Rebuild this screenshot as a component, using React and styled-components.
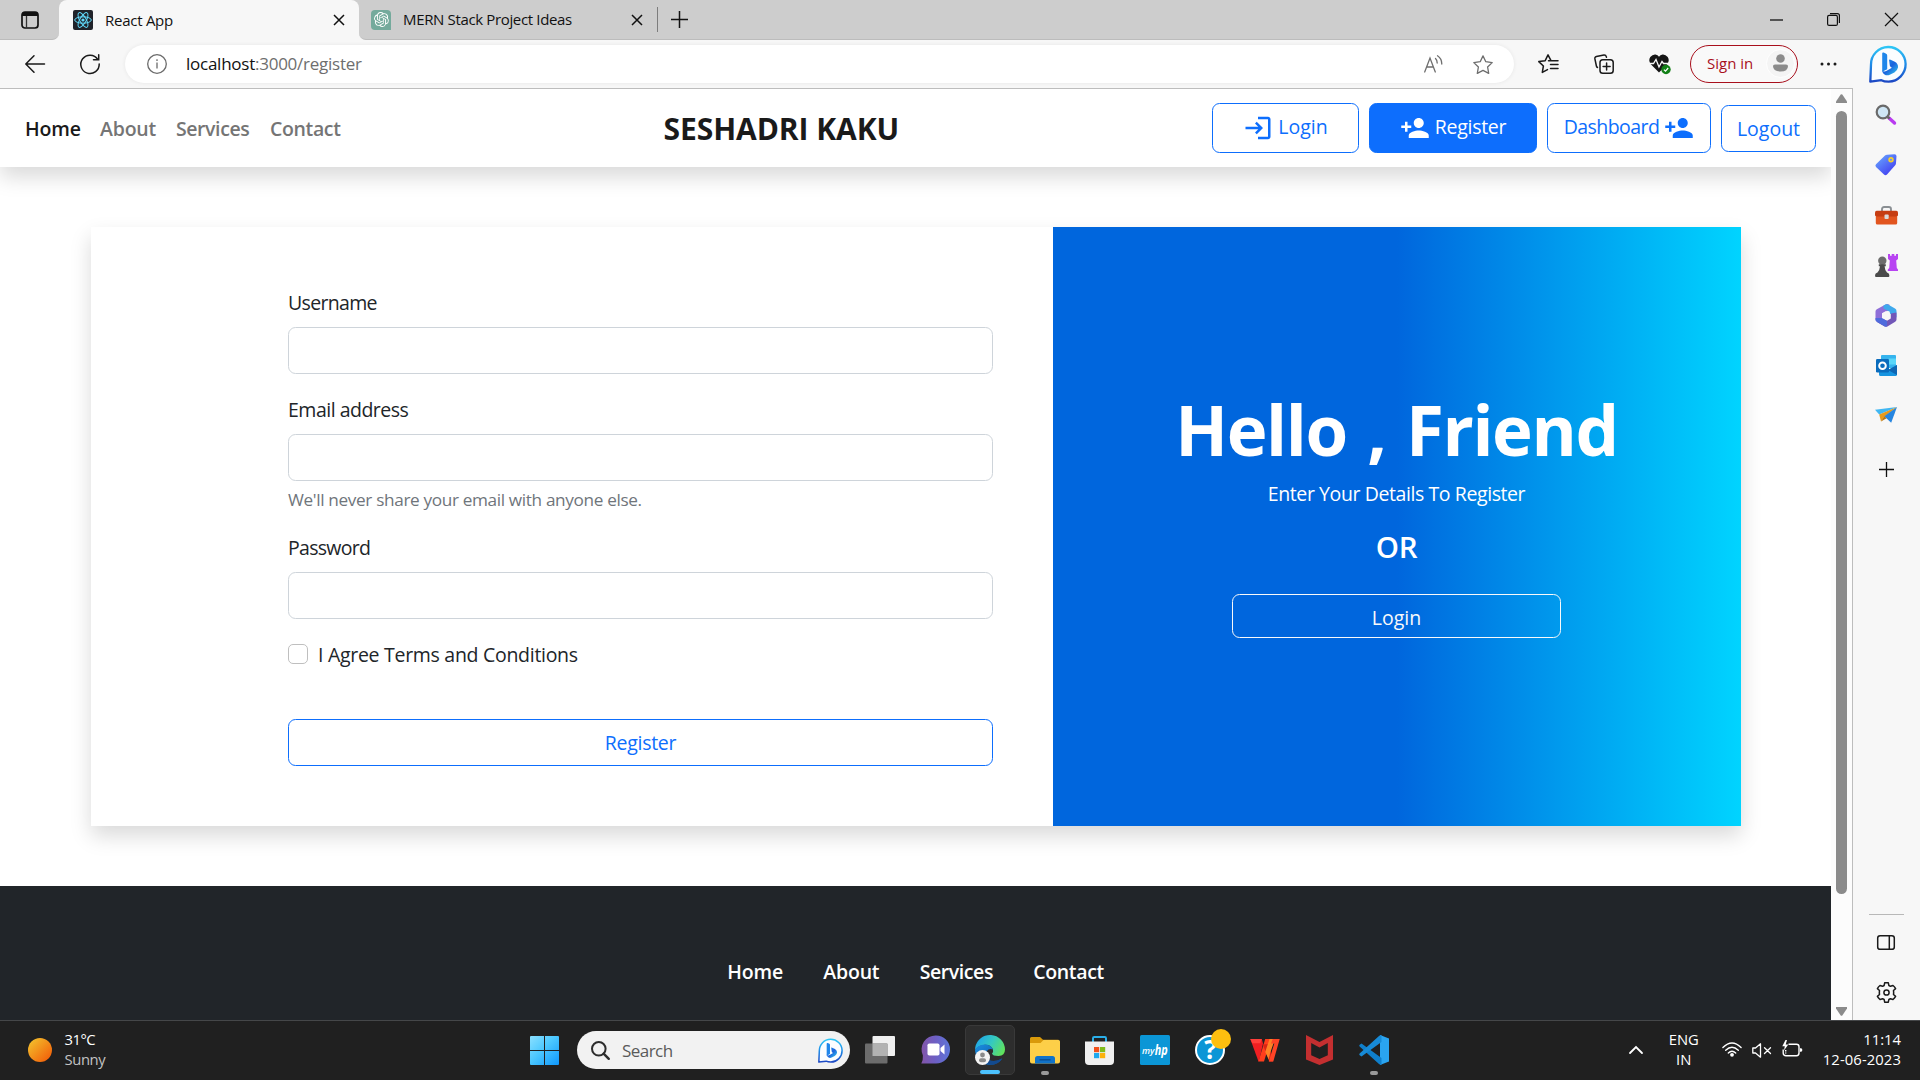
import React from "react";
import styled, { createGlobalStyle } from "styled-components";
import { SiOpenai } from "react-icons/si";

const GlobalStyle = createGlobalStyle`
  * { box-sizing: border-box; }
  body {
    margin: 0;
    background: #fff;
    font-family: "Open Sans", "Noto Sans", sans-serif;
    overflow: hidden;
  }
  svg { display: block; flex: none; overflow: visible; }
  button, input { font-family: inherit; margin: 0; }
`;

const Screen = styled.div`
  width: 1920px;
  height: 1080px;
  display: flex;
  flex-direction: column;
  background: #f7f7f7;
  overflow: hidden;
`;

/* ---------- tab strip ---------- */

const TabStrip = styled.div`
  height: 40px;
  flex: none;
  display: flex;
  background: #f7f7f7;
`;

const WorkspaceButton = styled.div`
  width: 59px;
  display: flex;
  align-items: center;
  justify-content: center;
  background: #cdcdcd;
  border-bottom: 1px solid #bcbcbc;
  border-bottom-right-radius: 7px;
`;

const ActiveTabSlot = styled.div`
  width: 300px;
  background: linear-gradient(#cdcdcd 50%, #f7f7f7 50%);
`;

const Tab = styled.div`
  height: 40px;
  width: ${(p) => p.$width}px;
  display: flex;
  align-items: center;
  padding: 0 15px 0 ${(p) => p.$pad}px;
  background: ${(p) => (p.$active ? "#f7f7f7" : "transparent")};
  border-radius: 8px 8px 0 0;
`;

const TabTitle = styled.span`
  flex: 1;
  margin-left: 12px;
  font-size: 15px;
  line-height: 38px;
  height: 39px;
  letter-spacing: ${(p) => p.$spacing}px;
  color: #111;
  white-space: nowrap;
`;

const InactiveStrip = styled.div`
  flex: 1;
  display: flex;
  align-items: center;
  background: #cdcdcd;
  border-bottom: 1px solid #bcbcbc;
  border-bottom-left-radius: 7px;
`;

const TabDivider = styled.div`
  width: 1px;
  height: 25px;
  background: #7d7d7d;
`;

const NewTab = styled.div`
  margin-left: 13px;
`;

const WindowControls = styled.div`
  margin-left: auto;
  display: flex;
`;

const WindowButton = styled.div`
  width: 57.5px;
  display: flex;
  align-items: center;
  justify-content: center;
`;

/* ---------- toolbar ---------- */

const Toolbar = styled.div`
  height: 48px;
  flex: none;
  display: flex;
  align-items: center;
  padding-left: 7px;
`;

const ToolButton = styled.div`
  width: ${(p) => p.$width || 55}px;
  padding-bottom: 1px;
  display: flex;
  align-items: center;
  justify-content: center;
`;

const AddressBar = styled.div`
  width: 1389px;
  height: 38px;
  margin: 0 7px 0 8px;
  padding: 0 21px 0 22px;
  display: flex;
  align-items: center;
  background: #fff;
  border-radius: 19px;
  box-shadow: 0 0 4px rgba(0, 0, 0, 0.07);
`;

const Url = styled.span`
  flex: 1;
  margin-left: 19px;
  padding-bottom: 1px;
  font-size: 17px;
  letter-spacing: -0.25px;
  color: #6e6e6e;
`;

const UrlHost = styled.span`
  color: #111;
`;

const AddressActions = styled.div`
  display: flex;
  align-items: center;
  gap: 30px;
`;

const SignIn = styled.div`
  width: 108px;
  height: 38px;
  margin: 0 3px 1px 3px;
  padding: 0 2px 1px 16px;
  display: flex;
  align-items: center;
  justify-content: space-between;
  border: 1.5px solid #a80f1c;
  border-radius: 19px;
  background: #f9f9f9;
  color: #a80f1c;
  font-size: 15px;
`;

const Avatar = styled.div`
  width: 29px;
  height: 29px;
  border-radius: 50%;
  background: #f4f4f4;
  border: 1px solid #fff;
  display: flex;
  align-items: center;
  justify-content: center;
`;

/* ---------- browser body ---------- */

const Body = styled.div`
  height: 932px;
  flex: none;
  display: flex;
`;

const Viewport = styled.div`
  width: 1853px;
  display: flex;
  border-top: 1px solid #bdbdbd;
  border-right: 1px solid #bdbdbd;
  background: #fff;
`;

const Page = styled.div`
  width: 1831px;
  height: 931px;
  overflow: hidden;
  display: flex;
  flex-direction: column;
`;

const Scrollbar = styled.div`
  width: 21px;
  display: flex;
  flex-direction: column;
  align-items: center;
  background: #fcfcfc;
  padding: 5px 0 4px;
`;

const ScrollThumb = styled.div`
  width: 11px;
  height: 783px;
  margin-top: 8px;
  border-radius: 6px;
  background: #8b8b8b;
`;

const ScrollDown = styled.div`
  margin-top: auto;
`;

/* ---------- site header ---------- */

const Header = styled.header`
  height: 78px;
  flex: none;
  display: grid;
  grid-template-columns: 638.500px 1fr auto;
  align-items: center;
  padding: 0 15px 0 25px;
  background: #fff;
  box-shadow: 0 10px 20px rgba(0, 0, 0, 0.15);
`;

const Nav = styled.nav`
  display: flex;
`;

const NavLink = styled.span`
  width: ${(p) => p.$width}px;
  padding-top: 1px;
  font-size: 19.5px;
  font-weight: 600;
  letter-spacing: ${(p) => p.$spacing}px;
  color: ${(p) => (p.$current ? "#1a1a1a" : "#757575")};
`;

const Brand = styled.span`
  padding-top: 1px;
  font-size: 30px;
  line-height: 36px;
  font-weight: 700;
  letter-spacing: -0.06px;
  color: #1a1a1a;
`;

const HeaderActions = styled.div`
  display: flex;
  align-items: center;
  gap: 10px;
`;

const OutlineButton = styled.button`
  width: ${(p) => p.$width}px;
  height: ${(p) => p.$height || 50}px;
  display: flex;
  align-items: center;
  justify-content: center;
  gap: 5px;
  padding: ${(p) => p.$drop || 0}px 0 0;
  border: 1px solid #0d6efd;
  border-radius: 7.5px;
  background: ${(p) => (p.$filled ? "#0d6efd" : "#fff")};
  color: ${(p) => (p.$filled ? "#fff" : "#0d6efd")};
  font-size: 19.5px;
  line-height: 30px;
  letter-spacing: ${(p) => p.$spacing || 0}px;
`;

const RaisedText = styled.span`
  padding-bottom: 2px;
`;

/* ---------- register card ---------- */

const Main = styled.main`
  flex: none;
  padding: 60px 90px 60px 91px;
`;

const Card = styled.section`
  height: 599px;
  display: grid;
  grid-template-columns: 962px 1fr;
  background: #fff;
  box-shadow: 0 10px 20px rgba(0, 0, 0, 0.15);
`;

const Form = styled.form`
  padding: 61px 60px 0 197px;
  display: flex;
  flex-direction: column;
`;

const Field = styled.div`
  display: flex;
  flex-direction: column;
  margin-bottom: 21px;
`;

const Label = styled.label`
  font-size: 19.5px;
  line-height: 30px;
  letter-spacing: ${(p) => p.$spacing}px;
  color: #212529;
`;

const Input = styled.input`
  height: 47px;
  margin-top: 9px;
  border: 1px solid #ced4da;
  border-radius: 7.5px;
  background: #fff;
  outline: none;
`;

const Hint = styled.span`
  margin: 6px 0 -1px;
  font-size: 17.2px;
  line-height: 26px;
  letter-spacing: -0.35px;
  color: #6f757b;
`;

const CheckRow = styled.div`
  height: 30px;
  display: flex;
  align-items: flex-start;
  gap: 10px;
  margin-bottom: 49px;
`;

const CheckBox = styled.span`
  width: 20px;
  height: 20px;
  margin-top: 4px;
  border: 1px solid #bfbfbf;
  border-radius: 5px;
`;

const Welcome = styled.aside`
  display: flex;
  flex-direction: column;
  align-items: center;
  padding: 160px 1px 0 0;
  background: linear-gradient(90deg, #0066dd 0%, #0066dd 50%, #00d4ff 100%);
  color: #fff;
`;

const WelcomeTitle = styled.h1`
  margin: 0 0 8px;
  font-size: 69px;
  line-height: 84px;
  font-weight: 700;
  letter-spacing: -1.4px;
  word-spacing: 4px;
`;

const WelcomeText = styled.p`
  margin: 0 0 20px;
  font-size: 19.5px;
  line-height: 30px;
  letter-spacing: -0.41px;
`;

const WelcomeOr = styled.p`
  margin: 0 0 29px;
  font-size: 29.5px;
  line-height: 36px;
  font-weight: 600;
  letter-spacing: -0.3px;
`;

const WelcomeLogin = styled.button`
  width: 329px;
  height: 44px;
  padding: 3px 0 0;
  border: 1px solid #f8f9fa;
  border-radius: 7.5px;
  background: transparent;
  color: #f8f9fa;
  font-size: 19.5px;
  line-height: 30px;
`;

const Footer = styled.footer`
  flex: 1;
  display: flex;
  justify-content: center;
  gap: 40.3px;
  padding-top: 71px;
  background: #212529;
`;

const FooterLink = styled.span`
  font-size: 19.5px;
  line-height: 30px;
  font-weight: 600;
  letter-spacing: ${(p) => p.$spacing}px;
  color: #fff;
`;

/* ---------- sidebar ---------- */

const Sidebar = styled.aside`
  width: 67px;
  height: 932px;
  display: flex;
  flex-direction: column;
  align-items: center;
  padding: 2px 1px 3px 0;
`;

const SideItem = styled.div`
  height: 50px;
  margin-top: ${(p) => p.$offset || 0}px;
  display: flex;
  align-items: center;
`;

const SideDivider = styled.div`
  width: 35px;
  height: 1px;
  margin: auto 0 2px;
  background: #b8b8b8;
`;

/* ---------- taskbar ---------- */

const Taskbar = styled.div`
  height: 60px;
  flex: none;
  display: flex;
  align-items: center;
  padding: 0 19px 1px 0;
  border-top: 1px solid #454749;
  background: #202020;
  color: #fff;
`;

const Weather = styled.div`
  width: 530px;
  display: flex;
  align-items: center;
  padding-left: 28px;
  gap: 12.5px;
`;

const Sun = styled.div`
  width: 24px;
  height: 24px;
  border-radius: 50%;
  background: linear-gradient(135deg, #f3bd2b 10%, #f2660c 85%);
`;

const Stack = styled.div`
  display: flex;
  flex-direction: column;
  align-items: ${(p) => p.$align};
  margin-right: ${(p) => p.$right || 0}px;
  padding-bottom: 2px;
`;

const StackLine = styled.span`
  font-size: 14.8px;
  line-height: 20px;
  letter-spacing: ${(p) => p.$spacing || 0}px;
  color: ${(p) => (p.$dim ? "#c3c3c3" : "#fff")};
`;

const SearchBox = styled.div`
  width: 273px;
  height: 38px;
  margin: 0 3px 0 18px;
  padding: 0 7px 0 14px;
  display: flex;
  align-items: center;
  border-radius: 19px;
  background: #f2f2f2;
`;

const SearchText = styled.span`
  flex: 1;
  margin-left: 12px;
  font-size: 17px;
  letter-spacing: -0.55px;
  color: #5a5a5a;
`;

const Task = styled.div`
  width: 50px;
  height: 50px;
  margin: 0 2.450px;
  display: flex;
  flex-direction: column;
  align-items: center;
  padding-top: ${(p) => (p.$active ? 9 : 10)}px;
  border-radius: 5px;
  border: ${(p) => (p.$active ? "1px solid #393939" : "none")};
  background: ${(p) => (p.$active ? "#2d2d2d" : "transparent")};
`;

const TaskMark = styled.div`
  width: ${(p) => (p.$active ? 20 : 8)}px;
  height: 4px;
  margin-top: auto;
  border-radius: 2px;
  background: ${(p) => (p.$active ? "#4cc2ff" : "#9a9a9a")};
`;

const Tray = styled.div`
  margin-left: auto;
  display: flex;
  align-items: center;
`;

const TrayIcon = styled.div`
  margin-right: ${(p) => p.$right}px;
  padding-bottom: ${(p) => p.$lift || 0}px;
`;

/* ---------- drawings ---------- */

const Close = ({ size = 10, stroke = 1.5 }) => (
  <svg width={size} height={size} viewBox="0 0 10 10" stroke="#111" strokeWidth={stroke}>
    <path d="M0 0L10 10M10 0L0 10" />
  </svg>
);

const WorkspaceIcon = () => (
  <svg width="18" height="18" viewBox="0 0 18 18">
    <rect x="1" y="1" width="16" height="16" rx="3" fill="none" stroke="#111" strokeWidth="1.7" />
    <path d="M1 5V3.5A2.5 2.5 0 0 1 3.5 1h11A2.5 2.5 0 0 1 17 3.5V5z" fill="#111" />
    <path d="M5.5 5v12" stroke="#333" strokeWidth="1.3" />
  </svg>
);

const ReactFavicon = () => (
  <svg width="20" height="20" viewBox="0 0 20 20">
    <rect width="20" height="20" rx="2" fill="#20232a" />
    <g fill="none" stroke="#61dafb" strokeWidth="1">
      <ellipse cx="10" cy="10" rx="8.3" ry="3.2" />
      <ellipse cx="10" cy="10" rx="8.3" ry="3.2" transform="rotate(60 10 10)" />
      <ellipse cx="10" cy="10" rx="8.3" ry="3.2" transform="rotate(120 10 10)" />
    </g>
    <circle cx="10" cy="10" r="1.6" fill="#61dafb" />
  </svg>
);

const ChatFavicon = styled.div`
  width: 20px;
  height: 20px;
  display: flex;
  align-items: center;
  justify-content: center;
  border-radius: 4px 4px 0 4px;
  background: #74aa9c;
  color: #fff;
`;

const BingIcon = ({ size, id }) => (
  <svg width={size} height={size} viewBox="0 0 38 38">
    <defs>
      <linearGradient id={id} x1="0" y1="0" x2="0" y2="1">
        <stop offset="0" stopColor="#2ec6f5" />
        <stop offset=".5" stopColor="#1f8ce8" />
        <stop offset="1" stopColor="#1c48c4" />
      </linearGradient>
      <linearGradient id={id + "b"} x1="0" y1="0" x2="1" y2="1">
        <stop offset="0" stopColor="#1f9bee" />
        <stop offset=".5" stopColor="#1b62dd" />
        <stop offset="1" stopColor="#35d3ee" />
      </linearGradient>
    </defs>
    <path d="M1.3 36.6L2 19.5A17.3 17.3 0 1 1 19.6 36.6Q15 36.6 12.4 35.2Q6 36 1.3 36.6Z" fill="#fbfdff" stroke={`url(#${id})`} strokeWidth="2.3" strokeLinejoin="round" />
    <path d="M13.2 8.6q0-1.5 1.5-1l2 .8q1.5.6 1.5 2v13.8l-5 2.6z" fill="#1f86ea" />
    <path d="M20.2 16q-.8-2.2 1.4-1.3l4.2 2q3.6 2 3.2 5.9-.6 3.2-3.6 4.9l-4.6 2.3q-3 1.2-5.3-.4-2.3-1.6-2.3-4.2 1.6 2.2 4.5.6l5.2-3-1.2-.9q-.6-.4-.9-1.3z" fill={`url(#${id}b)`} />
  </svg>
);

const LoginIcon = () => (
  <svg width="30" height="30" viewBox="0 0 24 24" fill="currentColor">
    <path d="M11 7L9.6 8.4l2.6 2.6H2v2h10.2l-2.6 2.6L11 17l5-5zm9 12h-8v2h8c1.1 0 2-.9 2-2V5c0-1.1-.9-2-2-2h-8v2h8z" />
  </svg>
);

const PersonAddIcon = () => (
  <svg width="30" height="30" viewBox="0 0 24 24" fill="currentColor">
    <path d="M15 12c2.21 0 4-1.79 4-4s-1.79-4-4-4-4 1.79-4 4 1.79 4 4 4zm-9-2V7H4v3H1v2h3v3h2v-3h3v-2H6zm9 4c-2.67 0-8 1.34-8 4v2h16v-2c0-2.66-5.33-4-8-4z" />
  </svg>
);

const Arrow = ({ down }) => (
  <svg width="11" height="9" viewBox="0 0 11 9" fill="#8b8b8b">
    <path d={down ? "M0 0h11v1.5L6.3 8.4q-.8.9-1.6 0L0 1.5z" : "M0 9h11V7.5L6.3.6q-.8-.9-1.6 0L0 7.5z"} />
  </svg>
);

const MagnifierIcon = () => (
  <svg width="22" height="22" viewBox="0 0 22 22">
    <path d="M14 14l5.5 5" stroke="#b93bf0" strokeWidth="3.4" strokeLinecap="round" />
    <path d="M12.6 12.8l2 1.8" stroke="#666" strokeWidth="2.4" />
    <circle cx="8" cy="8" r="6.3" fill="#cfe6f5" stroke="#6a6a6a" strokeWidth="2.2" />
  </svg>
);

const TagIcon = () => (
  <svg width="22" height="22" viewBox="0 0 22 22">
    <defs>
      <linearGradient id="tag" x1="0" y1="0" x2=".8" y2="1">
        <stop offset="0" stopColor="#6bb0ff" />
        <stop offset="1" stopColor="#4038f0" />
      </linearGradient>
    </defs>
    <path d="M10 1.4Q10.800 .7 12 .7L19.500 .3Q21.500 .3 21.500 2.200L21 9Q21 10.300 20.200 11.200L12 20.500Q10.500 22 9 20.600L1 13Q-.2 11.600 1 10.300Z" fill="url(#tag)" />
    <circle cx="16" cy="5.800" r="1.900" fill="#5f8cff" stroke="#f5cf2d" strokeWidth="1.700" />
  </svg>
);

const ToolboxIcon = () => (
  <svg width="23" height="19" viewBox="0 0 23 19">
    <path d="M7 5V3.200Q7 1 9.200 1h4.600Q16 1 16 3.200V5" fill="none" stroke="#8a8f93" strokeWidth="1.900" />
    <rect x=".8" y="8" width="21.400" height="10.500" rx="1.600" fill="#e2551f" />
    <path d="M0 6.500Q0 4.800 1.700 4.800h19.600Q23 4.800 23 6.500V9.500Q22 10.500 20 10.500H3Q1 10.500 0 9.500z" fill="#c63d12" />
    <rect x="9.500" y="8.500" width="4.200" height="4.600" rx="1" fill="#dadada" />
  </svg>
);

const ChessIcon = () => (
  <svg width="23" height="23" viewBox="0 0 23 23">
    <path d="M13 0h2v1.800h1.700V0h2.600v1.800H21V0h2v5l-1.800 1.500.6 7.500 1.200 1.400v1.600H12.800v-1.600l1.400-1.400.6-7.500L13 5z" fill="#b844f2" />
    <circle cx="7.300" cy="6.800" r="4.200" fill="#6d6d6d" />
    <path d="M3.800 10.200h7v2H9.600q.2 4 2.400 6.300 2.300.6 2.300 2.500v1.200q0 .8-.9.8H1q-.9 0-.9-.8V21q0-1.900 2.400-2.500 2.200-2.300 2.500-6.300H3.800z" fill="#4b4b4b" />
  </svg>
);

const CopilotRingIcon = () => (
  <svg width="22" height="23" viewBox="0 0 22 23">
    <path d="M11 .3L1.800 5.200Q.5 6 .5 7.600v8Q.5 17 1.800 17.700L7 20.500V9.500L14.500 6V.8Q12.500-.4 11 .3z" fill="#8f6fd8" />
    <path d="M8.500 1.600L11 .3Q12 0 13 .4l7 4Q21.500 5.300 21.500 7v6.500L14.800 9.600V7.800L8.500 4.500z" fill="#3fa9ec" />
    <path d="M21.500 8.500V15.600Q21.500 17 20.200 17.800L12.400 22.400Q11 23.100 9.600 22.400L2 18 8 14.500l4 2.200 3.800-2.200V9.500z" fill="#7257b8" />
    <path d="M.5 14v1.600Q.5 17 1.800 17.800L9.500 22.300q1.500.5 2.500 0V16.900L7 14z" fill="#4f6bdc" />
    <path d="M11 7l4 2.300v4.500l-4 2.300-4-2.300V9.300z" fill="#f7f7f7" />
  </svg>
);

const OutlookIcon = () => (
  <svg width="21" height="21" viewBox="0 0 21 21">
    <rect x="5" y="0" width="15" height="13" rx="1" fill="#36b4ee" />
    <rect x="12.500" y="3.500" width="7.500" height="6" fill="#59d6f9" />
    <path d="M3 11l9 4 9-5v9.500Q21 21 19.500 21H4.500Q3 21 3 19.500z" fill="#1694e0" />
    <path d="M21 10v10l-9-5z" fill="#0d66b4" />
    <rect x="0" y="4" width="13" height="13.500" rx="1.300" fill="#0a6cbd" />
    <circle cx="6.500" cy="10.700" r="3.300" fill="none" stroke="#fff" strokeWidth="2" />
  </svg>
);

const PlaneIcon = () => (
  <svg width="22" height="16" viewBox="0 0 22 16">
    <path d="M0 2.800L22 0 4.200 7.600z" fill="#41b7f2" />
    <path d="M22 0L4.200 7.600 6 14.500 9 10z" fill="#e79a1b" />
    <path d="M22 0L9.300 9.200 16.200 15.800Z" fill="#2585e0" />
    <path d="M6 14.500l3.300-5.300 2.300 2.100z" fill="#b87410" />
  </svg>
);

const PlusIcon = ({ size, stroke = 1.300 }) => (
  <svg width={size} height={size} viewBox={`0 0 ${size} ${size}`} stroke="#111" strokeWidth={stroke}>
    <path d={`M0 ${size / 2}H${size}M${size / 2} 0V${size}`} />
  </svg>
);

const PanelIcon = () => (
  <svg width="18" height="15" viewBox="0 0 18 15" fill="none" stroke="#1a1a1a" strokeWidth="1.500">
    <rect x=".7" y=".7" width="16.600" height="13.600" rx="2.400" />
    <path d="M12.300 1v13" />
  </svg>
);

const GearIcon = () => (
  <svg width="21" height="21" viewBox="0 0 21 21" fill="none" stroke="#1a1a1a" strokeWidth="1.500" strokeLinejoin="round">
    <path d="M8.700 .8Q10.500 .5 12.300 .8L12.900 3.500 14.400 4.300 17 3.500Q18.600 4.800 19.600 6.600L17.500 8.500Q17.800 10.500 17.500 12.500L19.600 14.400Q18.600 16.200 17 17.500L14.400 16.700 12.900 17.500 12.300 20.200Q10.500 20.500 8.700 20.200L8.100 17.500 6.600 16.700 4 17.500Q2.400 16.200 1.400 14.400L3.500 12.500Q3.200 10.500 3.500 8.500L1.400 6.600Q2.400 4.800 4 3.500L6.600 4.300 8.100 3.500Z" />
    <circle cx="10.500" cy="10.500" r="2.600" />
  </svg>
);

const WindowsIcon = () => (
  <svg width="29" height="29" viewBox="0 0 29 29">
    <defs>
      <linearGradient id="win" gradientUnits="userSpaceOnUse" x1="0" y1="0" x2="29" y2="29">
        <stop offset="0" stopColor="#8be0ff" />
        <stop offset=".45" stopColor="#4cc8ff" />
        <stop offset="1" stopColor="#0f97fb" />
      </linearGradient>
    </defs>
    <path d="M0 1q0-1 1-1h13v14H0zM15 0h13q1 0 1 1v13H15zM0 15h14v14H1q-1 0-1-1zM15 15h14v13q0 1-1 1H15z" fill="url(#win)" />
  </svg>
);

const TaskViewIcon = () => (
  <svg width="30" height="29" viewBox="0 0 30 29">
    <rect x="7.500" y="1" width="22.500" height="20" rx="1" fill="#efefef" />
    <rect x="0" y="8.500" width="22.500" height="20" rx="1" fill="#6c6c6c" />
    <path d="M7.500 8.500h15V21h-15z" fill="#b2b2b2" />
  </svg>
);

const ChatIcon = () => (
  <svg width="29" height="29" viewBox="0 0 29 29">
    <defs>
      <linearGradient id="chat" x1="0" y1="0" x2="1" y2="0">
        <stop offset="0" stopColor="#8355a8" />
        <stop offset=".5" stopColor="#6d5fc4" />
        <stop offset="1" stopColor="#5d76d8" />
      </linearGradient>
    </defs>
    <path d="M15 .5A14 14 0 1 1 15 28.500H.3Q2.200 25 1.900 20.500A14 14 0 0 1 15 .5z" fill="url(#chat)" />
    <rect x="6.500" y="8.500" width="12" height="12" rx="1.800" fill="#fff" />
    <path d="M19.500 13l4-3.500v10l-4-3.500z" fill="#fff" />
  </svg>
);

const EdgeIcon = () => (
  <svg width="30" height="30" viewBox="0 0 30 30">
    <defs>
      <linearGradient id="edgeTop" x1="0" y1=".3" x2="1" y2=".7">
        <stop offset="0" stopColor="#1ea5ea" />
        <stop offset=".5" stopColor="#35c9c0" />
        <stop offset="1" stopColor="#62e35a" />
      </linearGradient>
      <linearGradient id="edgeLow" x1="0" y1="0" x2="1" y2="1">
        <stop offset="0" stopColor="#1a8fe0" />
        <stop offset="1" stopColor="#0c4fa2" />
      </linearGradient>
    </defs>
    <path d="M.2 12.500A15 15 0 0 1 30 14.500Q30 20.500 23.500 21 17.500 21 17 18.500 18.600 16.500 18 14.500 16 9.500 10 9.700 3.500 10 .2 15z" fill="url(#edgeTop)" />
    <path d="M0 15Q3 9.700 9.500 9.600 16 9.600 18 14.500 14 13 11.500 16.500 9.500 21 13.500 25 19 28.500 27.300 23.500 23 30 15 30 1 29 0 15z" fill="url(#edgeLow)" />
    <path d="M12.500 15.500Q9 19 12.500 23.800 18 28.500 27.300 23.300 23.500 30 15.500 30 9 27 8.500 22 8.500 17.500 12.500 15.500z" fill="#134a8e" />
    <circle cx="7.500" cy="22.500" r="7.500" fill="#f4f4f4" />
    <circle cx="7.500" cy="20" r="2.400" fill="#8a8a8a" />
    <rect x="4" y="23.300" width="7" height="4" rx="2" fill="#8a8a8a" />
  </svg>
);

const FolderIcon = () => (
  <svg width="30" height="30" viewBox="0 0 30 30">
    <path d="M0 3.500Q0 2 1.500 2H10l3 2.700H28.500V10H0z" fill="#d99a0b" />
    <path d="M0 8H10.500L13.500 5H28.500Q30 5 30 6.500V26.500Q30 28.500 28 28.500H2Q0 28.500 0 26.500z" fill="#fdcf48" />
    <path d="M5 28.500V23.500Q5 21 7.500 21h15Q25 21 25 23.500v5z" fill="#1173c9" />
    <path d="M9.500 24.800h11" stroke="#0b4f92" strokeWidth="1.400" />
  </svg>
);

const StoreIcon = () => (
  <svg width="29" height="30" viewBox="0 0 29 30">
    <path d="M8 7V3.200Q8 2 9.200 2h10.600Q21 2 21 3.200V7" fill="none" stroke="#2aaee8" strokeWidth="2" />
    <path d="M0 6.500h29V26q0 4-4 4H4q-4 0-4-4z" fill="#f0f0f0" />
    <path d="M9 12h5.200v5.200H9z" fill="#f1511b" />
    <path d="M15 12h5.200v5.200H15z" fill="#80bb1a" />
    <path d="M9 18h5.200v5.200H9z" fill="#1ea8ef" />
    <path d="M15 18h5.200v5.200H15z" fill="#fbb20d" />
  </svg>
);

const HpIcon = () => (
  <svg width="30" height="30" viewBox="0 0 30 30">
    <rect width="30" height="30" rx="1.500" fill="#0b96d6" />
    <text x="2" y="18.500" fontSize="9.500" fontWeight="600" fill="#fff" fontStyle="italic" textLength="12.500" lengthAdjust="spacingAndGlyphs">my</text>
    <text x="14.800" y="19.500" fontSize="15" fontWeight="700" fill="#fff" fontStyle="italic" textLength="13" lengthAdjust="spacingAndGlyphs">hp</text>
  </svg>
);

const HelpIcon = () => (
  <svg width="30" height="30" viewBox="0 0 30 30">
    <circle cx="15" cy="15" r="14" fill="#0b96d6" stroke="#fff" strokeWidth="2" />
    <text x="15.500" y="24" textAnchor="middle" fontSize="26" fontWeight="700" fill="#fff">?</text>
    <circle cx="26" cy="4" r="10" fill="#fdbf0f" />
  </svg>
);

const WpsIcon = () => (
  <svg width="30" height="30" viewBox="0 0 30 30">
    <path d="M.3 4H11.800L13 8.500 9 26.500H8.500z" fill="#f01f22" />
    <path d="M.3 4H11.800L10.300 8.200H2.300z" fill="#ff3f3a" />
    <path d="M8.500 26.500L15.200 4H21L14 26.500z" fill="#ff3d1c" />
    <path d="M12.800 9.500L15.600 16.500 19.200 26.500H23L19 9z" fill="#d92315" />
    <path d="M15.200 17L19.500 4H25L20 18.500 18.800 24.500z" fill="#ff8125" />
    <path d="M18.800 26.500L24.300 8.500H21L22.700 4H29.700L23.300 26.500z" fill="#ff4426" />
  </svg>
);

const McAfeeIcon = () => (
  <svg width="27" height="30" viewBox="0 0 27 30">
    <path d="M0 0L13.500 7 27 0V24.500L13.500 30 0 24.500z" fill="#c42f30" />
    <path d="M5.200 8L13.500 12.500 21.800 8V20.300L13.500 24 5.200 20.300z" fill="#202020" />
  </svg>
);

const CodeIcon = () => (
  <svg width="30" height="30" viewBox="0 0 30 30">
    <path d="M21 0L30 3.500V26.500L21 30z" fill="#2aa4f0" />
    <path d="M2.500 8.500L22.500 23V30Q21 30 20 29L.6 11.500Q-.2 10.500 .7 9.700z" fill="#0f7fcb" />
    <path d="M2.500 21.500L22.500 7V0Q21 0 20 1L.6 18.500Q-.2 19.500 .7 20.300z" fill="#178ad6" />
  </svg>
);

const SearchGlyph = () => (
  <svg width="19" height="19" viewBox="0 0 19 19" fill="none" stroke="#2d2d2d" strokeWidth="2">
    <circle cx="7.800" cy="7.800" r="6.800" />
    <path d="M12.600 12.600L17.800 17.800" strokeWidth="2.400" strokeLinecap="round" />
  </svg>
);

const InfoIcon = () => (
  <svg width="20" height="20" viewBox="0 0 20 20" fill="none" stroke="#6b6b6b" strokeWidth="1.300">
    <circle cx="10" cy="10" r="9.300" />
    <path d="M10 8.500V14.500M10 5.300V7" />
  </svg>
);

const ReadAloudIcon = () => (
  <svg width="19" height="18" viewBox="0 0 19 18" fill="none" stroke="#6e6e6e" strokeWidth="1.300" strokeLinecap="round">
    <path d="M.7 17L6 3l5.300 14M2.700 12H9.300M11.500 3.500Q13.200 5 13.200 8M13.500 .8Q17.800 3.500 17.800 9" />
  </svg>
);

const starPath = "M10 .9L12.800 6.700 19.200 7.600 14.600 12 15.700 18.400 10 15.400 4.300 18.400 5.400 12 .8 7.600 7.200 6.700Z";

const StarIcon = () => (
  <svg width="20" height="19" viewBox="0 0 20 19" fill="none" stroke="#6e6e6e" strokeWidth="1.300" strokeLinejoin="round">
    <path d={starPath} />
  </svg>
);

const FavoritesIcon = () => (
  <svg width="21" height="19" viewBox="0 0 21 19" fill="none" stroke="#1a1a1a" strokeWidth="1.500" strokeLinejoin="round" strokeLinecap="round">
    <path d="M10.500 6.700H13L10 .9 7.200 6.700 .8 7.600 5.400 12 4.300 18.400 9.500 15.600M13 6.700H20M12.500 10.500H20M12.500 14.500H20" />
  </svg>
);

const CollectionsIcon = () => (
  <svg width="20" height="20" viewBox="0 0 20 20" fill="none" stroke="#1a1a1a" strokeWidth="1.500" strokeLinecap="round">
    <rect x="6" y="5.800" width="13.200" height="13.400" rx="2.800" />
    <path d="M12.600 9V16M9.100 12.500H16.100M3.500 13.500Q2.600 13 2.400 12L.9 4.900Q.6 3 2.400 2.500L9.900.9Q11.800.7 12.300 2.600L12.500 3.300" />
  </svg>
);

const HeartIcon = () => (
  <svg width="21" height="20" viewBox="0 0 21 20">
    <path d="M10 18.500L1.800 10.200Q-1 6.500 1.300 3 3.500 .2 6.500 .5 8.800 .8 10 2.800 11.200 .8 13.500 .5 16.500 .2 18.700 3 21 6.500 18.200 10.200Z" fill="#151515" />
    <path d="M0 9.500H4.500L7 5.500 10 13 13 7.500 14.500 9.500H20" fill="none" stroke="#f7f7f7" strokeWidth="1.300" />
    <circle cx="17" cy="15.500" r="4.700" fill="#128017" />
    <path d="M14.900 15.600L16.500 17.100 19.200 14" fill="none" stroke="#fff" strokeWidth="1.200" />
  </svg>
);

const BackIcon = () => (
  <svg width="20" height="18" viewBox="0 0 20 18" fill="none" stroke="#1a1a1a" strokeWidth="1.500" strokeLinecap="round" strokeLinejoin="round">
    <path d="M9 .8L.8 9 9 17.200M1 9H19.500" />
  </svg>
);

const ReloadIcon = () => (
  <svg width="20" height="20" viewBox="0 0 20 20" fill="none" stroke="#1a1a1a" strokeWidth="1.500" strokeLinecap="round">
    <path d="M17.700 5.300A9.200 9.200 0 1 0 19.200 10M18.700 .8V5.800H13.500" />
  </svg>
);

const PersonIcon = () => (
  <svg width="15" height="18" viewBox="0 0 15 18" fill="#8b8b8b">
    <circle cx="7.500" cy="4.500" r="4.300" />
    <path d="M2 10.500h11q2 0 2 1.500 0 5.500-7.500 5.500T0 12q0-1.500 2-1.500z" />
  </svg>
);

const WifiIcon = () => (
  <svg width="20" height="15" viewBox="0 0 20 15" fill="none" stroke="#fff" strokeWidth="1.400" strokeLinecap="round">
    <path d="M.9 5.500Q10-3.500 19.100 5.500M3.700 8.300Q10 2.200 16.300 8.300M6.300 11Q10 7.500 13.700 11" />
    <circle cx="10" cy="12.800" r="1.900" fill="#fff" stroke="none" />
  </svg>
);

const MuteIcon = () => (
  <svg width="20" height="15" viewBox="0 0 20 15" fill="none" stroke="#fff" strokeWidth="1.300" strokeLinejoin="round" strokeLinecap="round">
    <path d="M.8 5H3.500L8.500 .8V14.200L3.500 10H.8ZM12.500 4.800L18.500 10.500M18.500 4.800L12.500 10.500" />
  </svg>
);

const BatteryIcon = () => (
  <svg width="21" height="17" viewBox="0 0 21 17" fill="none" stroke="#fff" strokeWidth="1.400">
    <path d="M6.500 4.200H14.500Q17 4.200 17 6.700V13Q17 15.700 14.500 15.700H4Q1.200 15.700 1.200 13V9.500" />
    <path d="M18 8.200H19Q20.300 8.500 20.300 10T19 11.800H18z" fill="#fff" stroke="none" />
    <path d="M3.500 0L.3 6.300H2.800L2 10.500 6.300 4.500H3.700L5 0Z" fill="#fff" stroke="none" />
    <path d="M3.700 10V13.500" strokeDasharray="1.500 1" />
  </svg>
);

const ChevronUp = () => (
  <svg width="14" height="8" viewBox="0 0 14 8" fill="none" stroke="#fff" strokeWidth="1.800" strokeLinecap="round">
    <path d="M1 7L7 1 13 7" />
  </svg>
);

export default function App() {
  return (
    <Screen>
      <GlobalStyle />
      <TabStrip>
        <WorkspaceButton><WorkspaceIcon /></WorkspaceButton>
        <ActiveTabSlot>
          <Tab $active $width={300} $pad={14}>
            <ReactFavicon />
            <TabTitle $spacing={-0.26}>React App</TabTitle>
            <Close />
          </Tab>
        </ActiveTabSlot>
        <InactiveStrip>
          <Tab $width={298} $pad={12}>
            <ChatFavicon><SiOpenai size={15} /></ChatFavicon>
            <TabTitle $spacing={-0.35}>MERN Stack Project Ideas</TabTitle>
            <Close />
          </Tab>
          <TabDivider />
          <NewTab><PlusIcon size={17} stroke={1.500} /></NewTab>
          <WindowControls>
            <WindowButton>
              <svg width="13" height="2" viewBox="0 0 13 2"><path d="M0 1h13" stroke="#111" strokeWidth="1.300" /></svg>
            </WindowButton>
            <WindowButton>
              <svg width="13" height="13" viewBox="0 0 13 13" fill="none" stroke="#111" strokeWidth="1.200">
                <rect x=".6" y="2.400" width="9.800" height="10" rx="1.500" />
                <path d="M3 .6H10.400Q12.400 .6 12.400 2.600V10" />
              </svg>
            </WindowButton>
            <WindowButton><Close size={13} stroke={0.950} /></WindowButton>
          </WindowControls>
        </InactiveStrip>
      </TabStrip>

      <Toolbar>
        <ToolButton><BackIcon /></ToolButton>
        <ToolButton><ReloadIcon /></ToolButton>
        <AddressBar>
          <InfoIcon />
          <Url><UrlHost>localhost</UrlHost>:3000/register</Url>
          <AddressActions>
            <ReadAloudIcon />
            <StarIcon />
          </AddressActions>
        </AddressBar>
        <ToolButton><FavoritesIcon /></ToolButton>
        <ToolButton><CollectionsIcon /></ToolButton>
        <ToolButton $width={56}><HeartIcon /></ToolButton>
        <SignIn>
          Sign in
          <Avatar><PersonIcon /></Avatar>
        </SignIn>
        <ToolButton>
          <svg width="17" height="4" viewBox="0 0 17 4" fill="#1a1a1a">
            <circle cx="2" cy="2" r="1.500" /><circle cx="8.500" cy="2" r="1.500" /><circle cx="15" cy="2" r="1.500" />
          </svg>
        </ToolButton>
        <ToolButton $width={63}><BingIcon size={38} id="bingBar" /></ToolButton>
      </Toolbar>

      <Body>
        <Viewport>
          <Page>
            <Header>
              <Nav>
                <NavLink $current $width={75} $spacing={-0.13}>Home</NavLink>
                <NavLink $width={76} $spacing={-0.2}>About</NavLink>
                <NavLink $width={94} $spacing={-0.42}>Services</NavLink>
                <NavLink $width={90} $spacing={-0.36}>Contact</NavLink>
              </Nav>
              <Brand>SESHADRI KAKU</Brand>
              <HeaderActions>
                <OutlineButton $width={147}><LoginIcon /><RaisedText>Login</RaisedText></OutlineButton>
                <OutlineButton $width={168} $filled $spacing={-0.29}><PersonAddIcon /><RaisedText>Register</RaisedText></OutlineButton>
                <OutlineButton $width={164} $spacing={-0.56}><RaisedText>Dashboard</RaisedText><PersonAddIcon /></OutlineButton>
                <OutlineButton $width={95} $height={47} $drop={2}>Logout</OutlineButton>
              </HeaderActions>
            </Header>
            <Main>
              <Card>
                <Form>
                  <Field>
                    <Label $spacing={-0.68}>Username</Label>
                    <Input type="text" />
                  </Field>
                  <Field>
                    <Label $spacing={-0.5}>Email address</Label>
                    <Input type="email" />
                    <Hint>We'll never share your email with anyone else.</Hint>
                  </Field>
                  <Field>
                    <Label $spacing={-0.7}>Password</Label>
                    <Input type="password" />
                  </Field>
                  <CheckRow>
                    <CheckBox />
                    <Label $spacing={-0.29}>I Agree Terms and Conditions</Label>
                  </CheckRow>
                  <OutlineButton type="button" $width={705} $height={47} $spacing={-0.29} $drop={1}>Register</OutlineButton>
                </Form>
                <Welcome>
                  <WelcomeTitle>Hello , Friend</WelcomeTitle>
                  <WelcomeText>Enter Your Details To Register</WelcomeText>
                  <WelcomeOr>OR</WelcomeOr>
                  <WelcomeLogin>Login</WelcomeLogin>
                </Welcome>
              </Card>
            </Main>
            <Footer>
              <FooterLink $spacing={-0.13}>Home</FooterLink>
              <FooterLink $spacing={-0.2}>About</FooterLink>
              <FooterLink $spacing={-0.42}>Services</FooterLink>
              <FooterLink $spacing={-0.36}>Contact</FooterLink>
            </Footer>
          </Page>
          <Scrollbar>
            <Arrow />
            <ScrollThumb />
            <ScrollDown><Arrow down /></ScrollDown>
          </Scrollbar>
        </Viewport>
        <Sidebar>
          <SideItem><MagnifierIcon /></SideItem>
          <SideItem><TagIcon /></SideItem>
          <SideItem><ToolboxIcon /></SideItem>
          <SideItem><ChessIcon /></SideItem>
          <SideItem><CopilotRingIcon /></SideItem>
          <SideItem><OutlookIcon /></SideItem>
          <SideItem><PlaneIcon /></SideItem>
          <SideItem $offset={4}><PlusIcon size={15} /></SideItem>
          <SideDivider />
          <SideItem><PanelIcon /></SideItem>
          <SideItem><GearIcon /></SideItem>
        </Sidebar>
      </Body>

      <Taskbar>
        <Weather>
          <Sun />
          <Stack $align="flex-start">
            <StackLine $spacing={-0.5}>31°C</StackLine>
            <StackLine $dim $spacing={-0.4}>Sunny</StackLine>
          </Stack>
        </Weather>
        <WindowsIcon />
        <SearchBox>
          <SearchGlyph />
          <SearchText>Search</SearchText>
          <BingIcon size={25} id="bingTask" />
        </SearchBox>
        <Task><TaskViewIcon /></Task>
        <Task><ChatIcon /></Task>
        <Task $active><EdgeIcon /><TaskMark $active /></Task>
        <Task><FolderIcon /><TaskMark /></Task>
        <Task><StoreIcon /></Task>
        <Task><HpIcon /></Task>
        <Task><HelpIcon /></Task>
        <Task><WpsIcon /></Task>
        <Task><McAfeeIcon /></Task>
        <Task><CodeIcon /><TaskMark /></Task>
        <Tray>
          <TrayIcon $right={26} $lift={0}><ChevronUp /></TrayIcon>
          <Stack $align="center" $right={23}>
            <StackLine>ENG</StackLine>
            <StackLine>IN</StackLine>
          </Stack>
          <TrayIcon $right={10} $lift={1}><WifiIcon /></TrayIcon>
          <TrayIcon $right={10} $lift={0}><MuteIcon /></TrayIcon>
          <TrayIcon $right={20} $lift={3}><BatteryIcon /></TrayIcon>
          <Stack $align="flex-end">
            <StackLine>11:14</StackLine>
            <StackLine $spacing={0.1}>12-06-2023</StackLine>
          </Stack>
        </Tray>
      </Taskbar>
    </Screen>
  );
}
